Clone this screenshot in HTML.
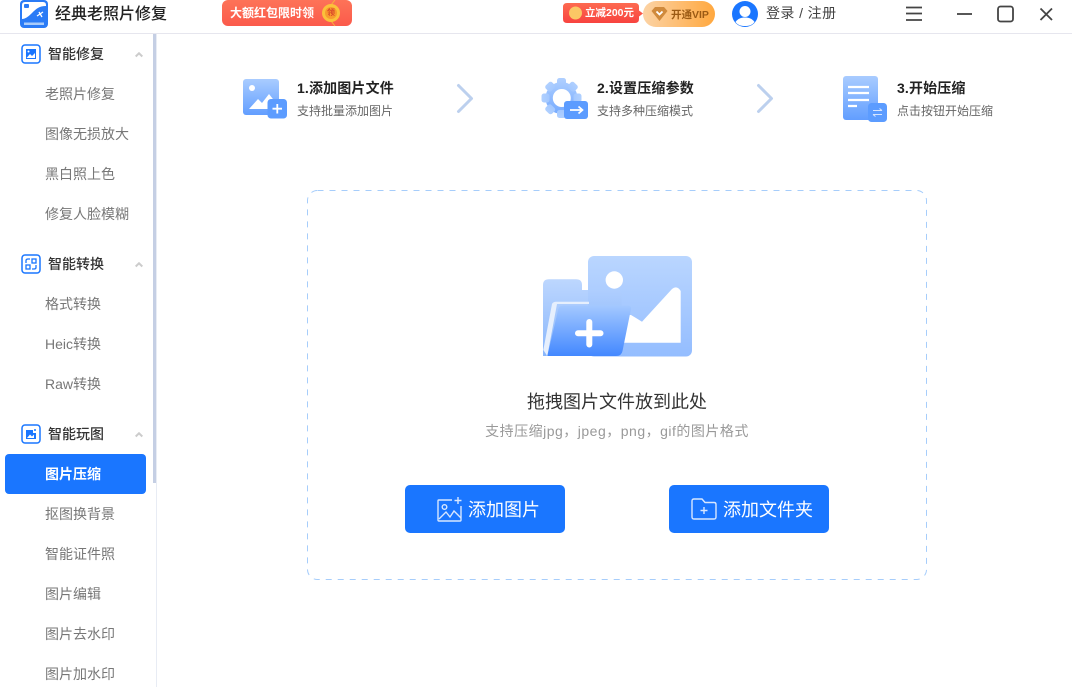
<!DOCTYPE html>
<html lang="zh-CN"><head><meta charset="utf-8"><title>经典老照片修复</title>
<style>
html,body{margin:0;padding:0;width:1072px;height:687px;overflow:hidden;background:#fff}
body{font-family:"Liberation Sans","Noto Sans CJK SC",sans-serif;position:relative}
.a{position:absolute;white-space:nowrap}
svg{position:absolute;overflow:visible}
.g{font-size:14px;line-height:20px;color:#333;font-weight:500;left:48px}
.m{font-size:14px;line-height:20px;color:#777;left:45px}
.t{font-size:14px;line-height:20px;font-weight:700;color:#222;letter-spacing:.15px}
.s{font-size:12px;line-height:18px;color:#666}
.btn{position:absolute;top:485px;width:160px;height:48px;background:#1a76ff;border-radius:5px}
.bt{color:#fff;font-size:18px;line-height:26px;top:497px}
</style></head><body>
<svg width="0" height="0" style="position:absolute"><defs>
<linearGradient id="bl" x1="0" y1="0" x2="0" y2="1"><stop offset="0" stop-color="#a9ccff"/><stop offset="1" stop-color="#629eff"/></linearGradient>
<linearGradient id="gr" gradientUnits="userSpaceOnUse" x1="0" y1="0" x2="0" y2="40"><stop offset="0" stop-color="#b0d0ff"/><stop offset="1" stop-color="#6fa6ff"/></linearGradient>
<linearGradient id="bl2" x1="0" y1="0" x2="0" y2="1"><stop offset="0" stop-color="#bad6ff"/><stop offset="1" stop-color="#94bdff"/></linearGradient>
<linearGradient id="bk" x1="0" y1="0" x2="0" y2="1"><stop offset="0" stop-color="#b7d3fe"/><stop offset="1" stop-color="#7fb0fb"/></linearGradient>
<linearGradient id="bl3" x1="0" y1="0" x2="0" y2="1"><stop offset="0" stop-color="#a3c8ff"/><stop offset="1" stop-color="#4388ff"/></linearGradient>
<linearGradient id="rd" x1="0" y1="0" x2="0" y2="1"><stop offset="0" stop-color="#fd7358"/><stop offset="1" stop-color="#fb5a4b"/></linearGradient>
<linearGradient id="rd2" x1="0" y1="0" x2="0" y2="1"><stop offset="0" stop-color="#fd6a50"/><stop offset="1" stop-color="#f8433f"/></linearGradient>
<linearGradient id="or" x1="0" y1="0" x2="1" y2="0"><stop offset="0" stop-color="#fcd3a5"/><stop offset="1" stop-color="#ffa83f"/></linearGradient>
</defs></svg>

<!-- title bar -->
<div class="a" style="left:0;top:33px;width:1072px;height:1px;background:#e6e6ee"></div>
<svg style="left:20px;top:0" width="28" height="28" viewBox="0 0 28 28">
<rect x="0" y="0" width="28" height="28" rx="4" fill="#2a7bf6"/>
<path d="M2 5Q2 2 5 2H23Q26 2 26 5V6C19 6 16 9 12 13 8 17 5 19 2 19Z" fill="#fff"/>
<rect x="4" y="4" width="5" height="4" rx="1" fill="#2a7bf6"/>
<path d="M17 16l6-4M19 12l3 5" stroke="#fff" stroke-width="1.300"/>
<rect x="4" y="22.500" width="20" height="2.500" fill="#a8cbfa"/>
</svg>
<div class="a" style="left:55px;top:3px;font-size:16px;line-height:24px;color:#222;font-weight:500">经典老照片修复</div>

<svg style="left:222px;top:0" width="130" height="26" viewBox="0 0 130 26">
<rect x="0" y="0" width="130" height="26" rx="6" fill="url(#rd)"/>
<path d="M113 0L109 5M113 26L109 21" stroke="#f8b23c" stroke-width="1"/>
<circle cx="109" cy="13" r="9" fill="#fbc13b"/><circle cx="109" cy="13" r="6" fill="#f89a2e"/>
</svg>
<div class="a" style="left:230px;top:4px;font-size:12px;line-height:18px;color:#fff;font-weight:700">大额红包限时领</div>
<div class="a" style="left:327px;top:8px;font-size:8px;line-height:10px;color:#d9482b;font-weight:700">领</div>

<svg style="left:563px;top:3px" width="152" height="24" viewBox="0 0 152 24">
<path d="M4 0H72Q76 0 76 4V7.500L80 10.500 76 13.500V16Q76 20 72 20H4Q0 20 0 16V4Q0 0 4 0Z" fill="url(#rd2)"/>
<circle cx="12.500" cy="10" r="6.500" fill="#fbc765"/>
<rect x="80" y="-2" width="72" height="26" rx="13" fill="url(#or)"/>
<path d="M92 4H101L104.500 8 96.500 18 88.500 8Z" fill="#d08a3c"/>
<path d="M93.500 8.500l3 3 3-3" fill="none" stroke="#fff" stroke-width="1.800"/>
</svg>
<div class="a" style="left:585px;top:4px;font-size:10.500px;line-height:18px;color:#fff;font-weight:700">立减200元</div>
<div class="a" style="left:671px;top:6px;font-size:10.500px;line-height:18px;color:#9b5a14;font-weight:700">开通VIP</div>

<svg style="left:732px;top:1px" width="26" height="26" viewBox="0 0 26 26">
<circle cx="13" cy="13" r="13" fill="#1a76ff"/>
<circle cx="13" cy="10.500" r="5.500" fill="#fff"/>
<path d="M3.500 21C6 17.500 9 16.500 13 16.500S20 17.500 22.500 21C20 24.500 16.500 25 13 25S6 24.500 3.500 21Z" fill="#fff"/>
</svg>
<div class="a" style="left:766px;top:4px;font-size:14px;line-height:18px;color:#444;letter-spacing:.4px">登录 / 注册</div>

<svg style="left:906px;top:6px" width="150" height="16" viewBox="0 0 150 16" fill="none" stroke="#444" stroke-width="1.800">
<path d="M0 1.500H16M0 7.500H16M0 14H16" stroke-width="1.800"/>
<path d="M51 8H66"/>
<rect x="92" y=".5" width="15" height="15" rx="2.500"/>
<path d="M134.500 2.500L146 14M146 2.500L134.500 14"/>
</svg>

<!-- sidebar -->
<div class="a" style="left:156px;top:34px;width:1px;height:653px;background:#e8ecf4"></div>
<div class="a" style="left:153px;top:34px;width:3px;height:449px;background:#c5cfe4"></div>

<svg style="left:21px;top:44px" width="20" height="20" viewBox="0 0 20 20">
<rect x="1" y="1" width="18" height="18" rx="3" fill="none" stroke="#1a76ff" stroke-width="1.500"/>
<rect x="5" y="5" width="10" height="10" fill="#1a76ff"/>
<path d="M5.500 14L9 10l2 2 3-3v5Z" fill="#fff"/><circle cx="7.500" cy="7.500" r="1" fill="#fff"/>
</svg>
<div class="a g" style="top:44px">智能修复</div>
<svg style="left:135px;top:52px" width="8" height="5" viewBox="0 0 8 5"><path d="M.7 4.500L4 1.300 7.300 4.500" fill="none" stroke="#ccc" stroke-width="2"/></svg>
<div class="a m" style="top:84px">老照片修复</div>
<div class="a m" style="top:124px">图像无损放大</div>
<div class="a m" style="top:164px">黑白照上色</div>
<div class="a m" style="top:204px">修复人脸模糊</div>

<svg style="left:21px;top:254px" width="20" height="20" viewBox="0 0 20 20">
<rect x="1" y="1" width="18" height="18" rx="3" fill="none" stroke="#1a76ff" stroke-width="1.500"/>
<path d="M5 9V6.500Q5 5 7 5H9M15 11V13.500Q15 15 13 15H11" fill="none" stroke="#1a76ff" stroke-width="1.300"/>
<rect x="11" y="5" width="4" height="4" fill="none" stroke="#1a76ff" stroke-width="1.300"/><rect x="5" y="11" width="4" height="4" fill="none" stroke="#1a76ff" stroke-width="1.300"/>
</svg>
<div class="a g" style="top:254px">智能转换</div>
<svg style="left:135px;top:262px" width="8" height="5" viewBox="0 0 8 5"><path d="M.7 4.500L4 1.300 7.300 4.500" fill="none" stroke="#ccc" stroke-width="2"/></svg>
<div class="a m" style="top:294px">格式转换</div>
<div class="a m" style="top:334px">Heic转换</div>
<div class="a m" style="top:374px">Raw转换</div>

<svg style="left:21px;top:424px" width="20" height="20" viewBox="0 0 20 20">
<rect x="1" y="1" width="18" height="18" rx="3" fill="none" stroke="#1a76ff" stroke-width="1.500"/>
<path d="M5 6H12V9H15V15H5Z" fill="#1a76ff"/><path d="M6 14L9 10.500l2 2 2-2V14Z" fill="#fff"/><circle cx="14" cy="6" r="1" fill="#1a76ff"/>
</svg>
<div class="a g" style="top:424px">智能玩图</div>
<svg style="left:135px;top:432px" width="8" height="5" viewBox="0 0 8 5"><path d="M.7 4.500L4 1.300 7.300 4.500" fill="none" stroke="#ccc" stroke-width="2"/></svg>
<div class="a" style="left:5px;top:454px;width:141px;height:40px;background:#1a76ff;border-radius:4px"></div>
<div class="a m" style="top:464px;color:#fff;font-weight:700">图片压缩</div>
<div class="a m" style="top:504px">抠图换背景</div>
<div class="a m" style="top:544px">智能证件照</div>
<div class="a m" style="top:584px">图片编辑</div>
<div class="a m" style="top:624px">图片去水印</div>
<div class="a m" style="top:664px">图片加水印</div>

<!-- steps -->
<svg style="left:243px;top:79px" width="45" height="40" viewBox="0 0 45 40">
<rect x="0" y="0" width="36" height="36" rx="3" fill="url(#bl)"/>
<circle cx="9" cy="9" r="3" fill="#fff"/>
<path d="M6 30L15 20 19 24 26 15 33 24V30Z" fill="#fff"/>
<rect x="24.500" y="20" width="19.500" height="19.500" rx="3.500" fill="#5c9cff"/>
<path d="M34.300 25V34.500M29.500 29.700H39" stroke="#fff" stroke-width="1.800"/>
</svg>
<div class="a t" style="left:297px;top:78px">1.添加图片文件</div>
<div class="a s" style="left:297px;top:102px">支持批量添加图片</div>
<svg style="left:457px;top:84px" width="16" height="29" viewBox="0 0 16 29"><path d="M1.500 1.500L14.500 14.500 1.500 27.500" fill="none" stroke="#bcd0ee" stroke-width="3" stroke-linecap="round" stroke-linejoin="round"/></svg>

<svg style="left:543px;top:78px" width="46" height="42" viewBox="0 0 46 42">
<g fill="url(#gr)">
<circle cx="18.500" cy="20" r="16"/>
<rect x="14" y="0" width="9" height="8" rx="2.500"/>
<rect x="14" y="0" width="9" height="8" rx="2.500" transform="rotate(45 18.500 20)"/>
<rect x="14" y="0" width="9" height="8" rx="2.500" transform="rotate(90 18.500 20)"/>
<rect x="14" y="0" width="9" height="8" rx="2.500" transform="rotate(135 18.500 20)"/>
<rect x="14" y="0" width="9" height="8" rx="2.500" transform="rotate(180 18.500 20)"/>
<rect x="14" y="0" width="9" height="8" rx="2.500" transform="rotate(225 18.500 20)"/>
<rect x="14" y="0" width="9" height="8" rx="2.500" transform="rotate(270 18.500 20)"/>
<rect x="14" y="0" width="9" height="8" rx="2.500" transform="rotate(315 18.500 20)"/>
</g>
<circle cx="18.800" cy="20" r="9" fill="#fff"/>
<rect x="21" y="23" width="24" height="18" rx="3" fill="#5c9cff"/>
<path d="M27 32H39M35.500 28.500l4 3.500-4 3.500" fill="none" stroke="#fff" stroke-width="1.700"/>
</svg>
<div class="a t" style="left:597px;top:78px">2.设置压缩参数</div>
<div class="a s" style="left:597px;top:102px">支持多种压缩模式</div>
<svg style="left:757px;top:84px" width="16" height="29" viewBox="0 0 16 29"><path d="M1.500 1.500L14.500 14.500 1.500 27.500" fill="none" stroke="#bcd0ee" stroke-width="3" stroke-linecap="round" stroke-linejoin="round"/></svg>

<svg style="left:843px;top:76px" width="45" height="47" viewBox="0 0 45 47">
<rect x="0" y="0" width="35" height="44" rx="3" fill="url(#bl)"/>
<path d="M5 11H26M5 17H26M5 24H26M5 30H14" stroke="#fff" stroke-width="2.300"/>
<rect x="25" y="27" width="19" height="19" rx="3.500" fill="#5c9cff"/>
<path d="M30 34.500H39M36.500 32.500l2.500 2M39 38.500H30M32.500 40.500l-2.500-2" fill="none" stroke="#d6e5ff" stroke-width="1.100"/>
</svg>
<div class="a t" style="left:897px;top:78px">3.开始压缩</div>
<div class="a s" style="left:897px;top:102px">点击按钮开始压缩</div>

<!-- drop zone -->
<svg style="left:307px;top:190px" width="620" height="390" viewBox="0 0 620 390">
<rect x=".5" y=".5" width="619" height="389" rx="10" fill="none" stroke="#a6cdfb" stroke-width="1" stroke-dasharray="6 6"/>
</svg>
<svg style="left:543px;top:256px" width="150" height="104" viewBox="0 0 150 104">
<rect x="45" y="0" width="104" height="100.500" rx="6" fill="url(#bl2)"/>
<circle cx="71.300" cy="24" r="8.700" fill="#fff"/>
<path d="M88 59L99 65.700 129 33Q134 29 137.700 35V86.700H70V59Z" fill="#fff"/>
<path d="M0 95V29Q0 23.300 6 23.300H33Q39 23.300 39 29V34H73Q78.700 34 78.700 40V90H40L3 100H0Z" fill="url(#bk)" opacity=".92"/>
<path d="M.3 94L9 48Q10 45.700 13 45.700H46V48H14L4.300 100Z" fill="#e6effd"/>
<path d="M15.300 53Q16 49.700 20 49.700H85Q88.500 49.700 88 53L79.500 95Q78.500 100 73 100H4.300Z" fill="url(#bl3)"/>
<path d="M46.300 66V88.500M35 77.300H57.500" stroke="#fff" stroke-width="6" stroke-linecap="round"/>
</svg>
<div class="a" style="left:307px;width:620px;top:389px;text-align:center;font-size:18px;line-height:26px;color:#333">拖拽图片文件放到此处</div>
<div class="a" style="left:307px;width:620px;top:422px;text-align:center;font-size:14px;line-height:18px;color:#999;letter-spacing:.5px">支持压缩jpg，jpeg，png，gif的图片格式</div>

<div class="btn" style="left:405px"></div>
<svg style="left:437px;top:497px" width="25" height="25" viewBox="0 0 25 25" fill="none" stroke="#d8e7ff" stroke-width="1.400">
<path d="M15 3H1.800Q1 3 1 4V23Q1 24 2 24H23Q24 24 24 23V9"/>
<circle cx="7.500" cy="10" r="2.300"/>
<path d="M2 22L9 15 13 20 17 14 24 21"/>
<path d="M21 0V7M17.500 3.500H24.500"/>
</svg>
<div class="a bt" style="left:468px">添加图片</div>

<div class="btn" style="left:669px"></div>
<svg style="left:691px;top:498px" width="26" height="22" viewBox="0 0 26 22" fill="none" stroke="#d8e7ff" stroke-width="1.400">
<path d="M1 3Q1 1 3 1H11L14 4.500H23Q25 4.500 25 6.500V19Q25 21 23 21H3Q1 21 1 19Z"/>
<path d="M13 9V16M9.500 12.500H16.500"/>
</svg>
<div class="a bt" style="left:723px">添加文件夹</div>
</body></html>
